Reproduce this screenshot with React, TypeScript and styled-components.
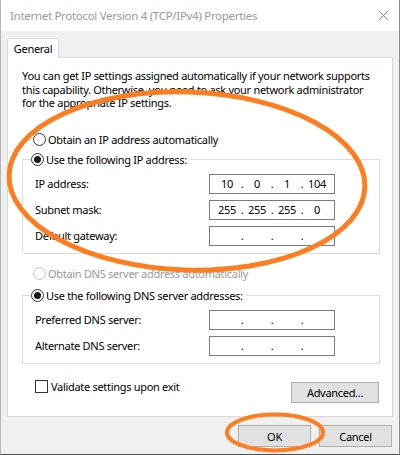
import React from 'react'
import styled, { createGlobalStyle } from 'styled-components'

const GlobalStyle = createGlobalStyle`
  html, body { margin: 0; padding: 0; }
  body {
    background: #f0f0f0;
    font-family: 'Noto Sans', 'Segoe UI', sans-serif;
    font-size: 11px;
    letter-spacing: -0.3px;
    color: #000;
  }
  * { box-sizing: border-box; }
`

type IpProps = { parts?: string[] }

const IpField = ({ parts = ['', '', '', ''] }: IpProps) => (
  <IpBox>
    {parts.map((p, i) => (
      <React.Fragment key={i}>
        <Octet>{p}</Octet>
        {i < 3 && <Dot>.</Dot>}
      </React.Fragment>
    ))}
  </IpBox>
)

const App = () => {
  return (
    <Window>
      <GlobalStyle />
      <TitleBar>
        <Title>Internet Protocol Version 4 (TCP/IPv4) Properties</Title>
        <CloseBtn>
          <svg width="11" height="11" viewBox="0 0 11 11">
            <path d="M0.5 0.5 L10.5 10.5 M10.5 0.5 L0.5 10.5" stroke="#8a8a8a" strokeWidth="1" fill="none" />
          </svg>
        </CloseBtn>
      </TitleBar>

      <Body>
        <TabStrip>
          <Tab>General</Tab>
        </TabStrip>

        <Panel>
          <Description>
            You can get IP settings assigned automatically if your network supports<br />
            this capability. Otherwise, you need to ask your network administrator<br />
            for the appropriate IP settings.
          </Description>

          <RadioRow $top={23}>
            <Radio />
            <span>Obtain an IP address automatically</span>
          </RadioRow>

          <Group $top={6}>
            <Legend>
              <Radio $checked />
              <span>Use the following IP address:</span>
            </Legend>
            <FieldRow>
              <span>IP address:</span>
              <IpField parts={['10', '0', '1', '104']} />
            </FieldRow>
            <FieldRow>
              <span>Subnet mask:</span>
              <IpField parts={['255', '255', '255', '0']} />
            </FieldRow>
            <FieldRow>
              <span>Default gateway:</span>
              <IpField />
            </FieldRow>
          </Group>

          <RadioRow $top={13} $disabled>
            <Radio $disabled />
            <span>Obtain DNS server address automatically</span>
          </RadioRow>

          <Group $top={8}>
            <Legend>
              <Radio $checked />
              <span>Use the following DNS server addresses:</span>
            </Legend>
            <FieldRow>
              <span>Preferred DNS server:</span>
              <IpField />
            </FieldRow>
            <FieldRow>
              <span>Alternate DNS server:</span>
              <IpField />
            </FieldRow>
          </Group>

          <BottomRow>
            <CheckRow>
              <Checkbox />
              <span>Validate settings upon exit</span>
            </CheckRow>
            <Button $width={88}>Advanced...</Button>
          </BottomRow>
        </Panel>

        <Footer>
          <Button $width={73}>OK</Button>
          <Button $width={73}>Cancel</Button>
        </Footer>
      </Body>

      <Marks width="400" height="455" viewBox="0 0 400 455">
        <ellipse cx="186" cy="181" rx="178" ry="89" transform="rotate(2 186 181)" />
        <ellipse cx="274" cy="432.5" rx="48" ry="18" strokeWidth="4" />
      </Marks>
    </Window>
  )
}

export default App

const Window = styled.div`
  position: relative;
  width: 400px;
  height: 455px;
  display: flex;
  flex-direction: column;
  background: #f0f0f0;
  border-left: 1px solid #b5b5b5;
  border-right: 1px solid #8c8c8c;
  border-bottom: 1px solid #4f4f4f;
  overflow: hidden;
`

const TitleBar = styled.div`
  height: 31px;
  flex: none;
  display: flex;
  align-items: center;
  background: #fff;
  padding-left: 9px;
`

const Title = styled.div`
  color: #999;
  font-size: 11.5px;
`

const CloseBtn = styled.div`
  margin-left: auto;
  width: 32px;
  height: 31px;
  display: flex;
  align-items: center;
  justify-content: center;
`

const Body = styled.div`
  flex: 1;
  display: flex;
  flex-direction: column;
  padding: 7px 6px 7px 6px;
`

const TabStrip = styled.div`
  display: flex;
`

const Tab = styled.div`
  position: relative;
  z-index: 1;
  height: 20px;
  width: 52px;
  margin-bottom: -1px;
  background: #fff;
  border: 1px solid #d9d9d9;
  border-bottom: none;
  display: flex;
  align-items: center;
  justify-content: center;
`

const Panel = styled.div`
  flex: 1;
  background: #fff;
  border: 1px solid #d9d9d9;
  padding: 11px 12px 0 14px;
  display: flex;
  flex-direction: column;
`

const Description = styled.p`
  margin: 0;
  line-height: 13.5px;
  white-space: nowrap;
`

const RadioRow = styled.label<{ $top?: number; $disabled?: boolean }>`
  display: flex;
  align-items: center;
  gap: 2px;
  height: 14px;
  margin: ${p => p.$top ?? 0}px 0 0 11px;
  color: ${p => (p.$disabled ? '#9a9a9a' : '#000')};
`

const Radio = styled.span<{ $checked?: boolean; $disabled?: boolean }>`
  width: 13px;
  height: 13px;
  flex: none;
  border-radius: 50%;
  border: 1px solid ${p => (p.$disabled ? '#c4c4c4' : '#333')};
  background: #fff;
  display: flex;
  align-items: center;
  justify-content: center;
  &::after {
    content: '';
    display: ${p => (p.$checked ? 'block' : 'none')};
    width: 7px;
    height: 7px;
    border-radius: 50%;
    background: #1a1a1a;
  }
`

const Group = styled.fieldset<{ $top?: number }>`
  margin: ${p => p.$top ?? 0}px 0 0 0;
  padding: 0 0 7px 0;
  border: 1px solid #dcdcdc;
  min-width: 0;
  display: flex;
  flex-direction: column;
  gap: 6px;
`

const Legend = styled.legend`
  display: flex;
  align-items: center;
  gap: 2px;
  height: 14px;
  margin-left: 8px;
  padding: 0 3px 0 0;
`

const FieldRow = styled.div`
  display: grid;
  grid-template-columns: 174px 126px;
  align-items: center;
  height: 20px;
  padding-left: 12px;
  &:first-of-type {
    margin-top: 7px;
  }
`

const IpBox = styled.div`
  height: 20px;
  border: 1px solid #7a7a7a;
  display: flex;
  align-items: center;
  padding-left: 5px;
`

const Octet = styled.span`
  width: 24px;
  text-align: center;
`

const Dot = styled.span`
  width: 6px;
  text-align: center;
`

const BottomRow = styled.div`
  display: flex;
  align-items: flex-start;
  justify-content: space-between;
  margin-top: 16px;
  padding-right: 1px;
`

const CheckRow = styled.label`
  display: flex;
  align-items: center;
  gap: 3px;
  height: 14px;
  margin-left: 13px;
`

const Checkbox = styled.span`
  width: 13px;
  height: 13px;
  border: 1px solid #333;
  background: #fff;
`

const Button = styled.button<{ $width: number }>`
  width: ${p => p.$width}px;
  height: ${p => (p.$width > 80 ? 21 : 22)}px;
  margin-top: ${p => (p.$width > 80 ? 2 : 0)}px;
  background: #e1e1e1;
  border: 1px solid #adadad;
  font-family: inherit;
  font-size: 11px;
  letter-spacing: inherit;
  color: #000;
  padding: 0;
`

const Footer = styled.div`
  display: flex;
  justify-content: flex-end;
  gap: 8px;
  margin-top: 8px;
  padding-right: 1px;
`

const Marks = styled.svg`
  position: absolute;
  top: 0;
  left: 0;
  pointer-events: none;
  fill: none;
  stroke: #fd7e21;
  stroke-width: 5;
`
